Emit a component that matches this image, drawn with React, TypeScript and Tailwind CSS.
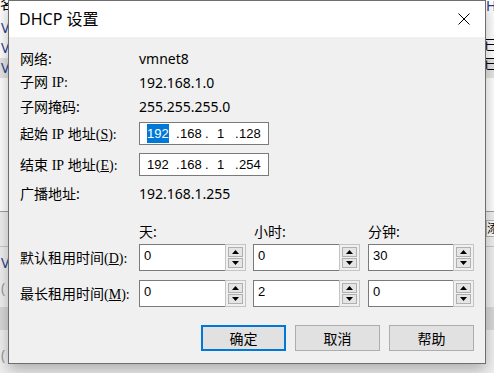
import React from 'react';

const UI_FONT = "font-['Noto_Sans','Noto_Sans_CJK_SC',sans-serif]";
const EDIT_FONT = "font-['Liberation_Sans','Noto_Sans_CJK_SC',sans-serif]";

// the ASCII parts of the labels come out in a narrow serif face on the original
function Latin({ children }: { children: React.ReactNode }) {
    return <span className="font-['Liberation_Serif',serif] text-[14px]">{children}</span>;
}

function Arrow({ down = false }: { down?: boolean }) {
    return (
        <svg width="7" height="4" viewBox="0 0 7 4">
            <path d={down ? 'M0 0 L7 0 L3.5 4Z' : 'M3.5 0 L7 4 L0 4Z'} fill="#000" />
        </svg>
    );
}

function IpBox({ last, selected = false }: { last: string; selected?: boolean }) {
    return (
        <div className={`flex h-[23px] w-[130px] items-center border border-[#7a7a7a] bg-white pl-[7px] text-[13px] text-black ${EDIT_FONT}`}>
            <span className={selected ? 'w-[22px] bg-[#0078d7] leading-[19px] text-white' : 'w-[22px] leading-[19px]'}>192</span>
            <span className="ml-[7px] w-[4px]">.</span>
            <span className="w-[22px]">168</span>
            <span className="ml-[3px] w-[4px]">.</span>
            <span className="ml-[8px] w-[7px]">1</span>
            <span className="ml-[11px] w-[4px]">.</span>
            <span className="w-[22px]">{last}</span>
        </div>
    );
}

function SpinBox({ value, wide = true }: { value: string; wide?: boolean }) {
    return (
        <div className={wide ? 'flex h-[27px] w-[107px]' : 'flex h-[27px] w-[106px]'}>
            <div className={`flex-1 border border-r-0 border-[#7a7a7a] bg-white pl-[4px] pt-[2px] text-[13px] leading-[18px] text-black ${EDIT_FONT}`}>
                {value}
            </div>
            <div className="flex w-[21px] flex-col gap-[1px] border border-[#c4c4c4] bg-[#f0f0f0] p-[2px]">
                <div className="flex flex-1 items-center justify-center border border-[#b0b0b0] bg-[#e5e5e5]">
                    <Arrow />
                </div>
                <div className="flex flex-1 items-center justify-center border border-[#b0b0b0] bg-[#e5e5e5]">
                    <Arrow down />
                </div>
            </div>
        </div>
    );
}

function Row({ label, children, className = '' }: { label: React.ReactNode; children: React.ReactNode; className?: string }) {
    return (
        <div className={`flex items-center ${className}`}>
            <div className="w-[119px] shrink-0 whitespace-nowrap">{label}</div>
            {children}
        </div>
    );
}

function Background() {
    return (
        <div className={`absolute inset-0 bg-white text-[14px] leading-[18px] ${UI_FONT}`}>
            <div className="absolute left-0 top-[-5px] text-black">名</div>
            <div className="absolute left-0 top-[58px] h-[20px] w-full bg-[#e5e5e5]" />
            <div className="absolute left-[1px] top-[19px] text-[#24418f]">V</div>
            <div className="absolute left-[1px] top-[39px] text-[#24418f]">V</div>
            <div className="absolute left-[1px] top-[59px] text-[#24418f]">V</div>
            <div className="absolute left-[486px] top-[-3px] text-[#24418f]">H</div>
            <div className="absolute left-[484px] top-[36px] text-black">已</div>
            <div className="absolute left-[484px] top-[55px] text-black">已</div>
            <div className="absolute left-0 top-[211px] h-[162px] w-full border-t border-[#a0a0a0] bg-[#f0f0f0]" />
            <div className="absolute left-[486px] top-[220px] h-[17px] w-[20px] border border-[#b4b4b4] bg-white text-[12px] leading-[15px]">添</div>
            <div className="absolute left-0 top-[246px] h-px w-full bg-[#c8c8c8]" />
            <div className="absolute left-0 top-[307px] h-[23px] w-full bg-[#d9d9d9]" />
            <div className="absolute left-[1px] top-[254px] text-[#24418f]">V</div>
            <div className="absolute left-[1px] top-[279px] text-[#9a9a9a]">(</div>
            <div className="absolute left-[1px] top-[346px] text-[#9a9a9a]">(</div>
        </div>
    );
}

export default function App() {
    return (
        <div className="relative h-[373px] w-[494px] overflow-hidden">
            <Background />

            <div className={`absolute left-[8px] top-0 flex h-[364px] w-[478px] flex-col border border-[#6e6e6e] bg-[#f0f0f0] text-[14px] text-black shadow-[0_6px_14px_rgba(0,0,0,0.28)] ${UI_FONT}`}>
                <div className="flex h-[36px] shrink-0 items-center justify-between bg-white pl-[10px] pr-[15px]">
                    <span className="text-[16px]">DHCP 设置</span>
                    <svg width="12" height="12" viewBox="0 0 12 12">
                        <path d="M0.5 0.5 L11.5 11.5 M11.5 0.5 L0.5 11.5" stroke="#000" strokeWidth="1" />
                    </svg>
                </div>

                <div className="flex flex-1 flex-col pl-[11px] pr-[11px] pt-[11px]">
                    <Row label="网络:" className="h-[20px]">
                        <span>vmnet8</span>
                    </Row>
                    <Row label={<>子网 <Latin>IP:</Latin></>} className="mt-[4px] h-[20px]">
                        <span>192.168.1.0</span>
                    </Row>
                    <Row label="子网掩码:" className="mt-[4px] h-[20px]">
                        <span>255.255.255.0</span>
                    </Row>
                    <Row
                        label={<>起始 <Latin>IP</Latin> 地址<Latin>(<span className="underline">S</span>):</Latin></>}
                        className="mt-[6px] h-[23px]"
                    >
                        <IpBox last="128" selected />
                    </Row>
                    <Row
                        label={<>结束 <Latin>IP</Latin> 地址<Latin>(<span className="underline">E</span>):</Latin></>}
                        className="mt-[8px] h-[23px]"
                    >
                        <IpBox last="254" />
                    </Row>
                    <Row label="广播地址:" className="mt-[7px] h-[20px]">
                        <span>192.168.1.255</span>
                    </Row>

                    <div className="mt-[18px] flex h-[20px] items-center pl-[119px]">
                        <span className="w-[115px]">天:</span>
                        <span className="w-[114px]">小时:</span>
                        <span>分钟:</span>
                    </div>

                    <Row
                        label={<>默认租用时间<Latin>(<span className="underline">D</span>):</Latin></>}
                        className="mt-[3px] h-[27px]"
                    >
                        <div className="flex gap-[7px]">
                            <SpinBox value="0" />
                            <SpinBox value="0" />
                        </div>
                        <div className="ml-[8px]">
                            <SpinBox value="30" wide={false} />
                        </div>
                    </Row>
                    <Row
                        label={<>最长租用时间<Latin>(<span className="underline">M</span>):</Latin></>}
                        className="mt-[9px] h-[27px]"
                    >
                        <div className="flex gap-[7px]">
                            <SpinBox value="0" />
                            <SpinBox value="2" />
                        </div>
                        <div className="ml-[8px]">
                            <SpinBox value="0" wide={false} />
                        </div>
                    </Row>

                    <div className="mt-[18px] flex justify-end gap-[9px]">
                        <button className="h-[26px] w-[85px] border-2 border-[#0078d7] bg-[#e1e1e1]">确定</button>
                        <button className="h-[26px] w-[85px] border border-[#adadad] bg-[#e1e1e1]">取消</button>
                        <button className="h-[26px] w-[85px] border border-[#adadad] bg-[#e1e1e1]">帮助</button>
                    </div>
                </div>
            </div>
        </div>
    );
}
